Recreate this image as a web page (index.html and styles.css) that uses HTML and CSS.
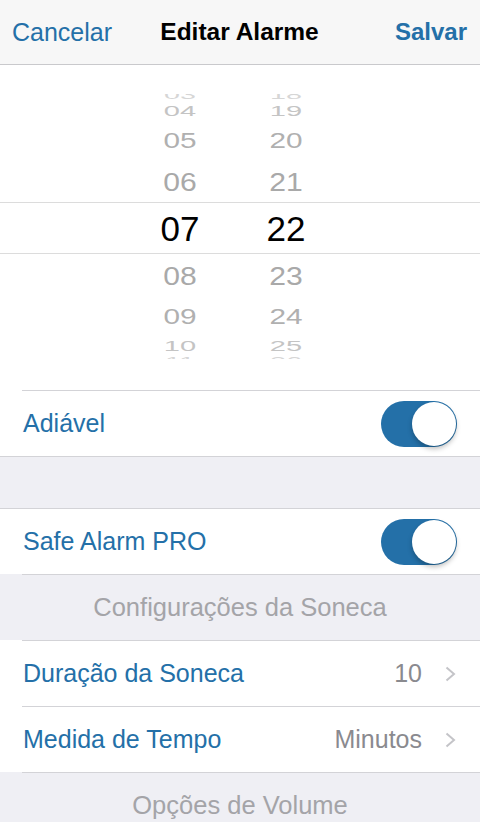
FILE: index.html
```html
<!DOCTYPE html>
<html>
<head>
  <title>Editar Alarme</title>
  <meta name="viewport" content="width=device-width, initial-scale=1.0">
  <link rel="stylesheet" href="styles.css">
</head>
<body>
  <nav class="navbar">
    <span class="nav-btn">Cancelar</span>
    <span class="nav-title">Editar Alarme</span>
    <span class="nav-btn nav-save">Salvar</span>
  </nav>

  <div class="group">
    <div class="picker">
      <div class="wheel">
        <div class="wheel-row d4"><span>03</span><span>18</span></div>
        <div class="wheel-row d3"><span>04</span><span>19</span></div>
        <div class="wheel-row d2"><span>05</span><span>20</span></div>
        <div class="wheel-row d1"><span>06</span><span>21</span></div>
        <div class="wheel-row selected"><span>07</span><span>22</span></div>
        <div class="wheel-row d1 below"><span>08</span><span>23</span></div>
        <div class="wheel-row d2 below"><span>09</span><span>24</span></div>
        <div class="wheel-row d3 below"><span>10</span><span>25</span></div>
        <div class="wheel-row d4 below"><span>11</span><span>26</span></div>
      </div>
    </div>
    <hr class="sep inset">
    <div class="row">
      <span class="label">Adiável</span>
      <span class="switch on"><span class="knob"></span></span>
    </div>
  </div>
  <hr class="sep">

  <div class="gap"></div>

  <hr class="sep">
  <div class="group">
    <div class="row">
      <span class="label">Safe Alarm PRO</span>
      <span class="switch on"><span class="knob"></span></span>
    </div>
  </div>
  <hr class="sep inset">

  <div class="section-header">Configurações da Soneca</div>

  <div class="group">
    <hr class="sep inset">
    <div class="row">
      <span class="label">Duração da Soneca</span>
      <span class="value">10</span>
      <svg class="chevron" width="11" height="16" viewBox="0 0 11 16"><polyline points="1.5,1.5 9,8 1.5,14.5" fill="none" stroke="#c4c4c8" stroke-width="2"/></svg>
    </div>
    <hr class="sep inset">
    <div class="row">
      <span class="label">Medida de Tempo</span>
      <span class="value">Minutos</span>
      <svg class="chevron" width="11" height="16" viewBox="0 0 11 16"><polyline points="1.5,1.5 9,8 1.5,14.5" fill="none" stroke="#c4c4c8" stroke-width="2"/></svg>
    </div>
  </div>
  <hr class="sep inset">

  <div class="section-header">Opções de Volume</div>
</body>
</html>
```

FILE: styles.css
```css
body {
  margin: 0;
  background-color: #efeff4;
  font-family: 'Liberation Sans', Helvetica, Arial, sans-serif;
  font-size: 25px;
  color: #000;
}

.navbar {
  display: grid;
  grid-template-columns: 1fr auto 1fr;
  align-items: center;
  height: 64px;
  padding: 0 13px 0 12px;
  background-color: #f7f7f7;
  border-bottom: 1px solid #c9c9cc;
}

.nav-btn {
  color: #2470a8;
}

.nav-title {
  font-weight: bold;
  font-size: 24.5px;
}

.nav-save {
  justify-self: end;
  font-weight: bold;
  font-size: 24px;
}

.group {
  background-color: #fff;
}

.sep {
  margin: 0;
  border: 0;
  height: 1px;
  background-color: #d3d3d7;
}

.sep.inset {
  margin-left: 22px;
}

/* time picker */
.picker {
  padding: 29px 0 31px;
}

.wheel {
  height: 265px;
  overflow: hidden;
}

.wheel-row {
  display: flex;
  align-items: center;
  gap: 36px;
  padding-left: 145px;
  font-size: 35px;
  line-height: 1;
  color: #a9a9a9;
}

.wheel-row span {
  display: inline-block;
  width: 70px;
  text-align: center;
}

.wheel-row.selected {
  box-sizing: border-box;
  height: 52px;
  border-top: 1px solid #dcdcdc;
  border-bottom: 1px solid #dcdcdc;
  color: #000;
}

.d1 { height: 42px; }
.d1 span { transform: scale(0.86, 0.74); }

.d2 { height: 40px; color: #b0b0b0; }
.d2 span { transform: scale(0.85, 0.62); }

.d3 { height: 20px; color: #c4c4c4; }
.d3.below { height: 18px; }
.d3 span { transform: scale(0.83, 0.42); }

.d4 { height: 12px; margin-top: -6px; color: #d6d6d6; }
.d4.below { height: 15px; margin-top: 0; }
.d4 span { transform: scale(0.82, 0.36); }

/* table rows */
.row {
  display: flex;
  align-items: center;
  height: 65px;
  padding: 0 24px 0 23px;
}

.label {
  flex: 1;
  color: #2470a8;
}

.value {
  color: #8a8a8f;
  margin-right: 23px;
}

.chevron {
  display: block;
}

.switch {
  box-sizing: border-box;
  display: flex;
  justify-content: flex-end;
  align-items: center;
  width: 76px;
  height: 46px;
  padding: 1px;
  margin-right: -1px;
  border-radius: 23px;
  background-color: #2470a8;
}

.knob {
  width: 44px;
  height: 44px;
  border-radius: 50%;
  background-color: #fff;
  box-shadow: 0 3px 5px rgba(0, 0, 0, 0.25);
}

.gap {
  height: 51px;
}

.section-header {
  height: 65px;
  line-height: 65px;
  text-align: center;
  font-size: 25.5px;
  color: #a4a4a8;
}
```
